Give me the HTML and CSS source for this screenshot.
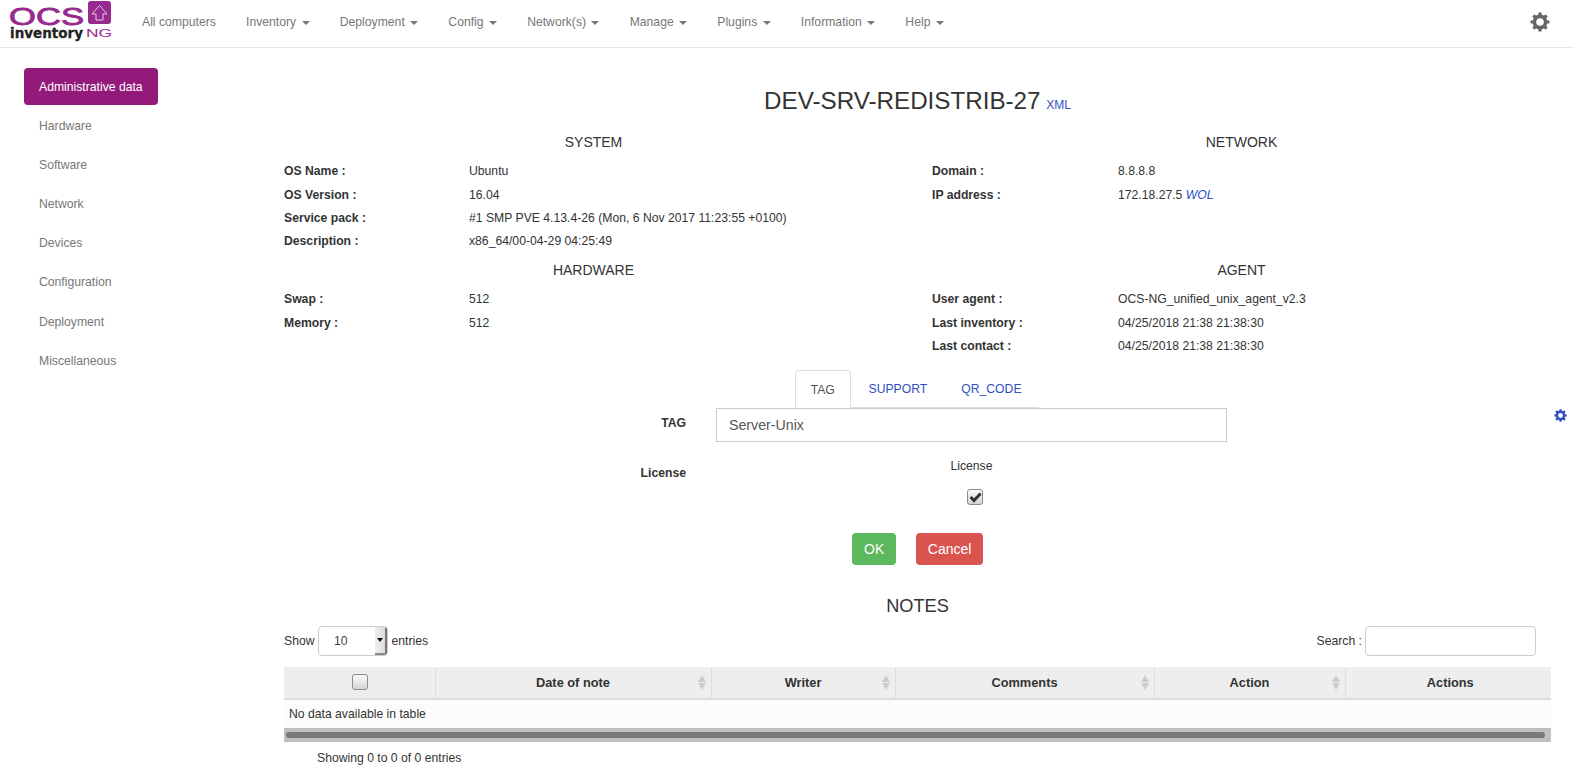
FILE: index.html
```html
<!DOCTYPE html>
<html>
<head>
    <title>OCS Inventory</title>
    <link rel="stylesheet" href="styles.css">
</head>
<body>
    <nav class="navbar">
        <a class="brand">
            <svg width="114" height="42" viewBox="0 0 114 42">
                <text x="9" y="24.5" class="logo-ocs" textLength="75" lengthAdjust="spacingAndGlyphs">OCS</text>
                <rect x="88" y="1" width="23" height="23" rx="3" fill="#962a8e"/>
                <path d="M99.5 5.5 L107 14 H103 V20 H96 V14 H92 Z" fill="none" stroke="#e8c8e6" stroke-width="1"/>
                <text x="10" y="37.5" class="logo-inv" textLength="73" lengthAdjust="spacingAndGlyphs">inventory</text>
                <text x="86" y="37" class="logo-ng" textLength="26" lengthAdjust="spacingAndGlyphs">NG</text>
            </svg>
        </a>
        <ul class="nav-links">
            <li>All computers</li>
            <li>Inventory <span class="caret"></span></li>
            <li>Deployment <span class="caret"></span></li>
            <li>Config <span class="caret"></span></li>
            <li>Network(s) <span class="caret"></span></li>
            <li>Manage <span class="caret"></span></li>
            <li>Plugins <span class="caret"></span></li>
            <li>Information <span class="caret"></span></li>
            <li>Help <span class="caret"></span></li>
        </ul>
        <svg class="top-gear" width="20" height="20" viewBox="0 0 20 20">
            <circle cx="10" cy="10" r="5.6" fill="none" stroke="#666" stroke-width="3.6"/>
            <path d="M10 .6V4M10 16V19.4M.6 10H4M16 10H19.4M3.4 3.4L5.8 5.8M14.2 14.2L16.6 16.6M16.6 3.4L14.2 5.8M5.8 14.2L3.4 16.6" stroke="#666" stroke-width="3.2"/>
        </svg>
    </nav>

    <div class="page">
        <aside class="sidebar">
            <a class="side-item active">Administrative data</a>
            <a class="side-item">Hardware</a>
            <a class="side-item">Software</a>
            <a class="side-item">Network</a>
            <a class="side-item">Devices</a>
            <a class="side-item">Configuration</a>
            <a class="side-item">Deployment</a>
            <a class="side-item">Miscellaneous</a>
        </aside>

        <main class="content">
            <h1 class="title">DEV-SRV-REDISTRIB-27 <a class="xml">XML</a></h1>

            <div class="info-grid">
                <section class="info-block">
                    <h2>SYSTEM</h2>
                    <div class="info-row"><b>OS Name :</b><span>Ubuntu</span></div>
                    <div class="info-row"><b>OS Version :</b><span>16.04</span></div>
                    <div class="info-row"><b>Service pack :</b><span>#1 SMP PVE 4.13.4-26 (Mon, 6 Nov 2017 11:23:55 +0100)</span></div>
                    <div class="info-row"><b>Description :</b><span>x86_64/00-04-29 04:25:49</span></div>
                </section>
                <section class="info-block">
                    <h2>NETWORK</h2>
                    <div class="info-row"><b>Domain :</b><span>8.8.8.8</span></div>
                    <div class="info-row"><b>IP address :</b><span>172.18.27.5 <a class="wol">WOL</a></span></div>
                </section>
                <section class="info-block">
                    <h2>HARDWARE</h2>
                    <div class="info-row"><b>Swap :</b><span>512</span></div>
                    <div class="info-row"><b>Memory :</b><span>512</span></div>
                </section>
                <section class="info-block">
                    <h2>AGENT</h2>
                    <div class="info-row"><b>User agent :</b><span>OCS-NG_unified_unix_agent_v2.3</span></div>
                    <div class="info-row"><b>Last inventory :</b><span>04/25/2018 21:38 21:38:30</span></div>
                    <div class="info-row"><b>Last contact :</b><span>04/25/2018 21:38 21:38:30</span></div>
                </section>
            </div>

            <ul class="tabs">
                <li class="tab active">TAG</li>
                <li class="tab">SUPPORT</li>
                <li class="tab">QR_CODE</li>
            </ul>

            <form class="tag-form">
                <div class="form-row">
                    <label>TAG</label>
                    <input class="tag-input" type="text" value="Server-Unix">
                </div>
                <div class="form-row license-row">
                    <label>License</label>
                    <div class="license-box">
                        <div>License</div>
                        <span class="check">
                            <svg width="13" height="11" viewBox="0 0 13 11"><path d="M1.6 5L5 8.6L11.6 1.4" fill="none" stroke="#333" stroke-width="3"/></svg>
                        </span>
                    </div>
                </div>
                <div class="form-buttons">
                    <button type="button" class="btn btn-ok">OK</button>
                    <button type="button" class="btn btn-cancel">Cancel</button>
                </div>
            </form>

            <h2 class="notes-title">NOTES</h2>

            <div class="table-tools">
                <div class="length">Show
                    <span class="select"><span class="select-val">10</span><span class="select-btn"><i></i></span></span>
                    entries</div>
                <div class="search">Search : <input type="text"></div>
            </div>

            <div class="table-wrap">
                <table class="notes">
                    <thead>
                        <tr>
                            <th class="c1"><span class="check"></span></th>
                            <th class="c2 sort">Date of note</th>
                            <th class="c3 sort">Writer</th>
                            <th class="c4 sort">Comments</th>
                            <th class="c5 sort">Action</th>
                            <th class="c6">Actions</th>
                        </tr>
                    </thead>
                    <tbody>
                        <tr><td colspan="6">No data available in table</td></tr>
                    </tbody>
                </table>
                <div class="hscroll"><div class="hthumb"></div></div>
            </div>
            <div class="table-info">Showing 0 to 0 of 0 entries</div>
        </main>
    </div>

    <svg class="side-gear" width="13" height="13" viewBox="0 0 20 20">
        <circle cx="10" cy="10" r="5.6" fill="none" stroke="#2f4fc4" stroke-width="3.8"/>
        <path d="M10 .4V4M10 16V19.6M.4 10H4M16 10H19.6M3.2 3.2L5.8 5.8M14.2 14.2L16.8 16.8M16.8 3.2L14.2 5.8M5.8 14.2L3.2 16.8" stroke="#2f4fc4" stroke-width="3.4"/>
    </svg>
</body>
</html>
```

FILE: styles.css
```css
* {
    box-sizing: border-box;
}
body {
    margin: 0;
    font-family: "Liberation Sans", Arial, sans-serif;
    font-size: 12.2px;
    color: #333;
    background: #fff;
    height: 769px;
    overflow: hidden;
}
a {
    color: #2f4fc4;
}

/* top bar */
.navbar {
    display: flex;
    align-items: center;
    height: 48px;
    border-bottom: 1px solid #e7e7e7;
}
.brand {
    display: block;
    height: 42px;
    margin-bottom: 5px;
    width: 142px;
    flex: none;
}
.logo-ocs {
    font-family: "Liberation Sans", sans-serif;
    font-size: 24px;
    fill: #962a8e;
    stroke: #962a8e;
    stroke-width: .8;
}
.logo-inv {
    font-family: "DejaVu Sans", sans-serif;
    font-weight: bold;
    font-size: 14.5px;
    fill: #222;
    stroke: #222;
    stroke-width: .3;
}
.logo-ng {
    font-family: "Liberation Sans", sans-serif;
    font-size: 11px;
    fill: #962a8e;
}
.nav-links {
    display: flex;
    flex: 1;
    list-style: none;
    margin: 0;
    padding: 0 0 3px 0;
    gap: 30.2px;
    color: #777;
}
.caret {
    display: inline-block;
    width: 0;
    height: 0;
    margin-left: 2px;
    vertical-align: middle;
    border-top: 4px solid #777;
    border-left: 4px solid transparent;
    border-right: 4px solid transparent;
}
.top-gear {
    margin: 0 24px 3px 0;
}
.side-gear {
    position: fixed;
    right: 7px;
    top: 409px;
}

/* page layout */
.page {
    display: flex;
    padding: 20px 23px 0 24px;
}
.sidebar {
    width: 134px;
    flex: none;
    margin-right: 126px;
}
.side-item {
    display: block;
    height: 37px;
    line-height: 38px;
    padding-left: 15px;
    margin-bottom: 2.1px;
    color: #777;
    border-radius: 4px;
}
.side-item.active {
    background: #931a7b;
    color: #fff;
}
.content {
    flex: 1;
    min-width: 0;
}
.title {
    margin: 16px 0 0 0;
    font-size: 24.2px;
    font-weight: 500;
    line-height: 33px;
    text-align: center;
}
.xml {
    font-size: 12px;
    margin-left: -1px;
}

/* info blocks */
.info-grid {
    display: grid;
    grid-template-columns: 1fr 1fr;
    grid-template-rows: 128px 114px;
    column-gap: 29px;
    margin-top: 6px;
}
.info-block h2 {
    margin: 0;
    padding-bottom: 4.4px;
    font-size: 14px;
    font-weight: 500;
    line-height: 28px;
    text-align: center;
}
.info-row {
    display: flex;
    height: 23.3px;
    line-height: 23.3px;
}
.info-row b {
    width: 185px;
    flex: none;
}
.info-block:nth-child(even) .info-row b {
    width: 186px;
}
.wol {
    font-style: italic;
}

/* tabs and form */
.tabs {
    display: flex;
    list-style: none;
    margin: 0 0 0 511px;
    padding: 0;
    width: 244px;
    border-bottom: 1px solid #ddd;
    height: 38px;
}
.tab {
    height: 38px;
    line-height: 38px;
    padding: 0 16px;
    margin-left: 2px;
    color: #2f4fc4;
}
.tab.active {
    color: #555;
    border: 1px solid #ddd;
    border-bottom-color: #fff;
    border-radius: 4px 4px 0 0;
    padding: 0 14.7px;
    margin-left: 0;
}
.form-row {
    display: flex;
}
.form-row label {
    width: 402px;
    text-align: right;
    font-weight: bold;
    padding-top: 8px;
    flex: none;
}
.tag-input {
    width: 511px;
    height: 34px;
    margin-left: 30px;
    padding: 0 12px;
    border: 1px solid #ccc;
    font: 14.2px "Liberation Sans", Arial, sans-serif;
    color: #555;
}
.license-row {
    margin-top: 16px;
}
.license-row label {
    padding-top: 8px;
}
.license-box {
    width: 511px;
    margin-left: 30px;
    text-align: center;
    line-height: 17px;
}
.check {
    display: inline-flex;
    align-items: center;
    justify-content: center;
    width: 16px;
    height: 16px;
    border: 1px solid #8a8a8a;
    border-radius: 3px;
    background: linear-gradient(#fafafa, #d4d4d4);
}
.license-box .check {
    margin: 14px 0 0 7px;
}
.form-buttons {
    display: flex;
    justify-content: center;
    gap: 20px;
    margin-top: 25px;
}
.btn {
    height: 32px;
    padding: 0 12px;
    border: 0;
    border-radius: 4px;
    font: 14px "Liberation Sans", Arial, sans-serif;
    color: #fff;
}
.btn-ok {
    background: #5cb85c;
}
.btn-cancel {
    padding: 0 11.5px;
    background: #d9534f;
}

/* notes table */
.notes-title {
    margin: 27px 0 0 0;
    font-size: 18.2px;
    font-weight: 500;
    line-height: 28px;
    text-align: center;
}
.table-tools {
    display: flex;
    justify-content: space-between;
    align-items: center;
    margin-top: 6px;
    height: 30px;
}
.length {
    display: flex;
    align-items: center;
    gap: 3.5px;
}
.select {
    display: flex;
    width: 70px;
    height: 30px;
    border: 1px solid #ccc;
    border-radius: 4px;
    background: #fff;
    overflow: hidden;
}
.select-val {
    flex: 1;
    padding-left: 15px;
    line-height: 28px;
    color: #444;
}
.select-btn {
    width: 12px;
    background: linear-gradient(90deg, #eee, #ddd);
    border-right: 2px solid #777;
    border-bottom: 2px solid #888;
    display: flex;
    align-items: center;
    justify-content: center;
}
.select-btn i {
    border-top: 4px solid #111;
    border-left: 3px solid transparent;
    border-right: 3px solid transparent;
}
.search {
    display: flex;
    align-items: center;
    gap: 3px;
    margin-right: 15px;
}
.search input {
    width: 171px;
    height: 30px;
    border: 1px solid #ccc;
    border-radius: 4px;
}
.table-wrap {
    margin-top: 11px;
}
.notes {
    width: 100%;
    table-layout: fixed;
    border-collapse: collapse;
}
.notes th {
    height: 32px;
    background: #eee;
    border-left: 1px solid #ddd;
    border-bottom: 2px solid #ddd;
    font-size: 12.8px;
    position: relative;
}
.notes th:first-child {
    border-left: 0;
}
.notes th .check {
    margin: 3px 0 0 1px;
}
.notes .sort::before,
.notes .sort::after {
    content: "";
    position: absolute;
    right: 5px;
    border-left: 4.5px solid transparent;
    border-right: 4.5px solid transparent;
}
.notes .sort::before {
    top: 8px;
    border-bottom: 7px solid #ccc;
}
.notes .sort::after {
    top: 16px;
    border-top: 7px solid #ccc;
}
.notes td {
    height: 30px;
    padding: 0 5px;
    background: #fcfcfc;
    border-bottom: 1px solid #bbb;
}
.notes .c1 { width: 151px; }
.notes .c2 { width: 276px; }
.notes .c3 { width: 184px; }
.notes .c4 { width: 259px; }
.notes .c5 { width: 191px; }
.notes .c6 { padding-left: 5px; }
.hscroll {
    height: 13px;
    padding: 3px 6px 0 2px;
    background: #bfbfbf;
}
.hthumb {
    height: 6px;
    border-radius: 3px;
    background: #767a7a;
}
.table-info {
    margin: 9px 0 0 33px;
}
```
